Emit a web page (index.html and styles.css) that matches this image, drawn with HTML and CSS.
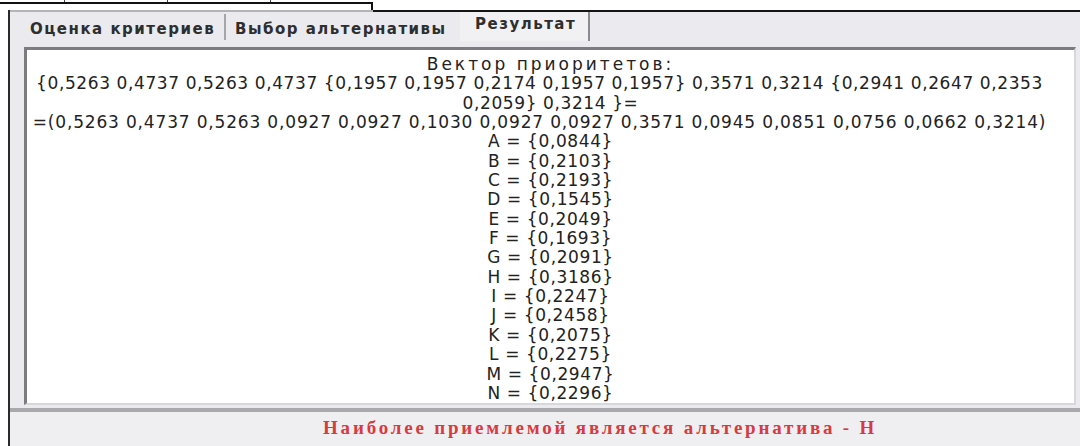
FILE: index.html
```html
<!DOCTYPE html>
<html lang="ru">
<head>
<meta charset="utf-8">
<title>Результат</title>
<link rel="stylesheet" href="styles.css">
</head>
<body>
<div class="stub">
  <div class="ticks">
    <span class="cell c1"></span>
    <span class="cell c2"></span>
    <span class="cell c3"></span>
  </div>
  <div class="stub-edge"></div>
</div>
<div class="window">
  <div class="frame-top"><span class="ft-a"></span><span class="ft-b"></span></div>
  <div class="tabs">
    <div class="tab t1">Оценка критериев</div>
    <div class="tab t2">Выбор альтернативы</div>
    <div class="tab t3 active">Результат</div>
  </div>
  <div class="page">
    <div class="memo">
      <div class="line head">Вектор приоритетов:</div>
      <div class="line long">{0,5263 0,4737 0,5263 0,4737 {0,1957 0,1957 0,2174 0,1957 0,1957} 0,3571 0,3214 {0,2941 0,2647 0,2353</div>
      <div class="line">0,2059} 0,3214 }=</div>
      <div class="line long product">=(0,5263 0,4737 0,5263 0,0927 0,0927 0,1030 0,0927 0,0927 0,3571 0,0945 0,0851 0,0756 0,0662 0,3214)</div>
      <div class="line">A = {0,0844}</div>
      <div class="line">B = {0,2103}</div>
      <div class="line">C = {0,2193}</div>
      <div class="line">D = {0,1545}</div>
      <div class="line">E = {0,2049}</div>
      <div class="line">F = {0,1693}</div>
      <div class="line">G = {0,2091}</div>
      <div class="line">H = {0,3186}</div>
      <div class="line">I = {0,2247}</div>
      <div class="line">J = {0,2458}</div>
      <div class="line">K = {0,2075}</div>
      <div class="line">L = {0,2275}</div>
      <div class="line">M = {0,2947}</div>
      <div class="line">N = {0,2296}</div>
    </div>
  </div>
  <div class="status">Наиболее приемлемой является альтернатива - H</div>
</div>
</body>
</html>
```

FILE: styles.css
```css
html, body {
  margin: 0;
  padding: 0;
}

body {
  width: 1080px;
  height: 446px;
  overflow: hidden;
  background: #ffffff;
  font-family: "DejaVu Sans", sans-serif;
  color: #262626;
}

/* bottom edge of the table row above the window */
.stub {
  width: 373px;
  height: 10px;
}

.ticks {
  display: flex;
  height: 2px;
}

.cell {
  height: 2px;
  border-right: 1px solid #444;
}

.c1 { width: 64px; }
.c2 { width: 102px; }
.c3 { width: 102px; }

.stub-edge {
  box-sizing: border-box;
  height: 8px;
  border-top: 2px solid #111;
  border-right: 2px solid #111;
}

/* application window */
.window {
  display: flex;
  flex-direction: column;
  margin-left: 8px;
  height: 436px;
  border-left: 2px solid #2a2a2a;
  background: #ebebef;
}

.frame-top {
  display: flex;
  height: 2px;
}

.ft-a {
  width: 363px;
  background: #b4b4b8;
}

.ft-b {
  flex: 1;
  background: #141414;
}

/* tab strip */
.tabs {
  display: flex;
  height: 35px;
  background: #ebebef;
}

.tab {
  display: flex;
  align-items: center;
  box-sizing: border-box;
  font-size: 15px;
  font-weight: bold;
  letter-spacing: 1.5px;
  color: #2e2e2e;
  white-space: nowrap;
}

.t1 {
  width: 216px;
  padding-left: 20px;
  padding-top: 3px;
  border-right: 2px solid #a6a6aa;
  margin: 2px 0 7px;
}

.t2 {
  width: 234px;
  padding-left: 9px;
  padding-bottom: 2px;
}

.t3 {
  width: 130px;
  padding-left: 15px;
  padding-bottom: 5px;
  background: #f1f1f4;
  border-right: 2px solid #8c8c90;
  margin-bottom: 6px;
}

/* page with the output memo */
.page {
  display: flex;
  padding: 0 4px 0 14px;
  background: #ebebef;
}

.memo {
  flex: 1;
  box-sizing: border-box;
  height: 358px;
  padding-top: 5px;
  background: #ffffff;
  border-style: solid;
  border-width: 3px 2px 2px 3px;
  border-color: #7c7c80 #d8d8dc #d8d8dc #7c7c80;
  text-align: center;
  font-size: 17px;
  line-height: 19.35px;
  letter-spacing: 0.6px;
  color: #222222;
}

.line {
  white-space: nowrap;
}

/* wrapped vector rows sit a little left of the memo centre */
.long {
  margin-right: 22px;
}

.product {
  letter-spacing: 0.83px;
}

.head {
  letter-spacing: 3px;
}

/* status bar with the final answer */
.status {
  flex: 1;
  margin-top: 3px;
  padding-left: 313px;
  border-top: 4px solid #a9a9ad;
  background: #efeff2;
  font-family: "Liberation Serif", serif;
  font-size: 19px;
  font-weight: bold;
  letter-spacing: 2.8px;
  line-height: 31px;
  color: #d83a3e;
}
```
